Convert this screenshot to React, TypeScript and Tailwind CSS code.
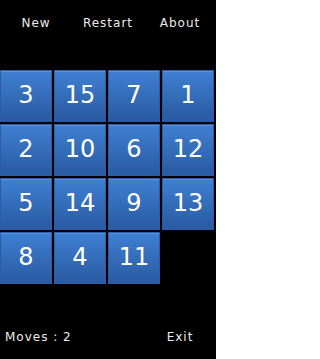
import React from "react";

const tiles: (number | null)[] = [3, 15, 7, 1, 2, 10, 6, 12, 5, 14, 9, 13, 8, 4, 11, null];

export default function App() {
  return (
    <div className="w-[216px] h-[359px] bg-black flex flex-col text-[#ececec] overflow-hidden" style={{ fontFamily: '"DejaVu Sans", sans-serif' }}>
      <div className="h-[46px] grid grid-cols-3 items-center text-[12px] tracking-[1px]">
        <div className="text-center">New</div>
        <div className="text-center">Restart</div>
        <div className="text-center">About</div>
      </div>
      <div className="mt-[24px] w-[214px] grid grid-cols-4 gap-[2px]">
        {tiles.map((t, i) =>
          t === null ? (
            <div key={i} className="h-[52px]" />
          ) : (
            <div
              key={i}
              className="h-[52px] flex items-center justify-center border border-[#2c5da6] bg-gradient-to-b from-[#3f80d2] to-[#2a5aa2] shadow-[inset_0_1px_0_#5a93da] text-white text-[24px] leading-none pb-[2px]"
            >
              {t}
            </div>
          )
        )}
      </div>
      <div className="mt-[43px] h-[20px] grid grid-cols-3 items-center text-[12px] tracking-[1px]">
        <div className="col-span-2 pl-[5px]">Moves : 2</div>
        <div className="text-center">Exit</div>
      </div>
    </div>
  );
}
